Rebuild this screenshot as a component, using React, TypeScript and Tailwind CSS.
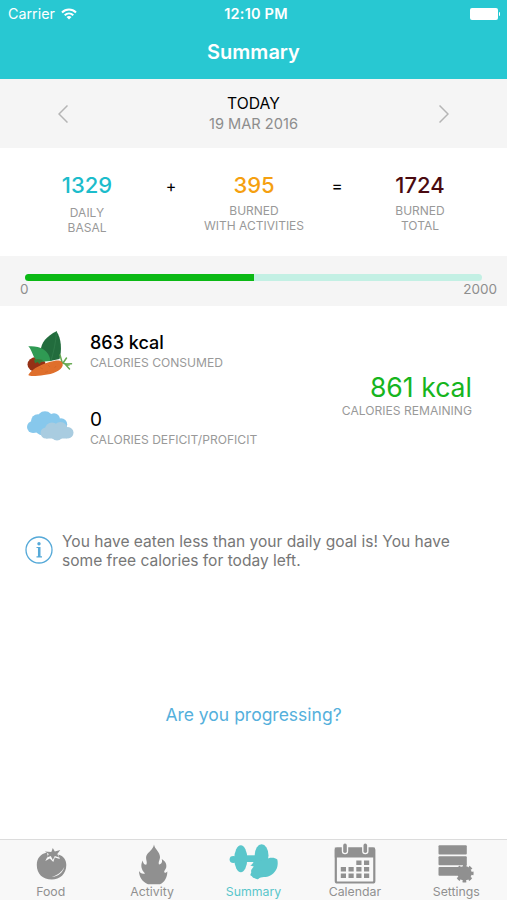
import React from 'react';

const FoodIcon = () => (
  <svg width="50" height="43" viewBox="-0.8 0 50 43" fill="currentColor">
    <path d="M10 22C10 15 14 11 20 9.500L21 13L18.500 18L23 15.500L26.500 19L28 14.500L33 16L31.500 11.500C37 13 39.500 17 39.500 22C39.500 31 33 36.500 25 36.500C16 36.500 10 31 10 22Z" />
    <path d="M26 5L28 8.500L33.500 7L30.500 11L32.500 14.500L28 13L26 17L24 13L20 14.500L22 11L18 8.500L24.500 9Z" />
    <path d="M37.500 24C36 30 31 33.500 25 34C31 32 35 29 37.500 24Z" fill="#f8f8f8" />
  </svg>
);

const ActivityIcon = () => (
  <svg width="50" height="43" viewBox="-0.5 0 50 43" fill="currentColor">
    <path d="M26.500 1.500C27 6 32.500 9 32.500 14C32.500 17 30.500 19 31.500 21.500C34.500 21 35 18.500 34.200 16C37 17.500 39.500 20.500 38.800 24C38.300 26.500 36 28 37 29.500C38 30 39 29.500 39.800 28.200C40 34 37 39.500 32.500 41.300H20.500C15 39 11.500 34 11.500 28C12.500 30 15 31.500 17.500 30.500C14 27 12.500 22 15.300 17.500C15.500 20 16.500 21.700 18.700 21.700C20.500 19.500 17.500 16 19 12.500C20.500 9 25.500 7 26.500 1.500Z" />
  </svg>
);

const SummaryIcon = () => (
  <svg width="50" height="43" viewBox="-1.300 0 50 43" fill="currentColor">
    <ellipse cx="4" cy="16.500" rx="3.700" ry="3.400" />
    <ellipse cx="11.500" cy="15.700" rx="6.500" ry="13.500" />
    <rect x="15" y="12.300" width="14" height="6.700" />
    <ellipse cx="32.300" cy="12.500" rx="6.900" ry="11.200" />
    <path d="M26 17C29 18 33 18 36 16.500C40 14.500 45 14 48 16.500C49.500 23 47 29 41 32.500C37 35 32 33 29 36C27.500 37 26 35 24.500 35C23 34.800 23 33 21.300 32.500C20.500 31 22.500 30 21.800 28.500C21.500 26.500 23.500 25 24.500 23.500L21 22.500C23.500 21.500 24 18.500 26 17Z" />
  </svg>
);

const CalendarIcon = () => (
  <svg width="50" height="43" viewBox="-0.3 0 50 43" fill="currentColor">
    <rect x="5.500" y="5.500" width="38.500" height="34" rx="1.500" fill="none" stroke="currentColor" strokeWidth="2.200" />
    <rect x="4.500" y="4.500" width="40" height="10" />
    <rect x="11.500" y="-0.500" width="6.400" height="11.800" rx="3.200" fill="#f8f8f8" />
    <rect x="31.800" y="-0.500" width="6.400" height="11.800" rx="3.200" fill="#f8f8f8" />
    <rect x="12.900" y="0.600" width="3.600" height="9.500" rx="1.800" />
    <rect x="33.200" y="0.600" width="3.600" height="9.500" rx="1.800" />
    <path d="M26 17.500h5.200v4.600H26zM33.700 17.500h5.200v4.600h-5.200zM10.500 24h5.200v4.600h-5.200zM18.200 24h5.200v4.600h-5.200zM26 24h5.200v4.600H26zM33.700 24h5.200v4.600h-5.200zM10.500 30.500h5.200v4.600h-5.200zM18.200 30.500h5.200v4.600h-5.200zM26 30.500h5.200v4.600H26zM33.700 30.500h5.200v4.600h-5.200z" />
  </svg>
);

const SettingsIcon = () => (
  <svg width="50" height="43" viewBox="0 0 50 43" fill="currentColor">
    <rect x="7.500" y="2.300" width="28.300" height="9.300" rx="1" />
    <rect x="7.500" y="13.200" width="28.300" height="9" rx="1" />
    <path d="M8.500 24H33V32.800H8.500Q7.500 32.800 7.500 31.800V25Q7.500 24 8.500 24Z" />
    <circle cx="33.500" cy="30.300" r="7.200" />
    <circle cx="33.500" cy="30.300" r="7.800" fill="none" stroke="currentColor" strokeWidth="2.600" strokeDasharray="3.600 2.526" strokeDashoffset="1.800" />
  </svg>
);

const VegetablesIcon = () => (
  <svg width="50" height="50" viewBox="0 0 50 50">
    <path d="M31.500 1.300C22 6 15.500 13 15.800 21C17 26 21 30 25 31L34.500 29C37 20 36.500 9 31.500 1.300Z" fill="#226c3d" />
    <path d="M31.500 1.300C31 12 28.500 22 26 31" fill="none" stroke="#33804d" strokeWidth="0.700" />
    <ellipse cx="11.500" cy="34.500" rx="9" ry="7.500" fill="#953116" />
    <path d="M3.300 16.300C13 15.500 24 18.500 25.500 31L14 32C7 28 8 21 3.300 16.300Z" fill="#2f9a53" />
    <path d="M9 29.500L13 29L18 30L14.500 34L12.500 32L10 33.500Z" fill="#3a7b37" />
    <path d="M34 32L44 35M37 32L35 25M38 33L41.500 28M41 34L46.500 33.800M40 34L44.500 39" fill="none" stroke="#65a951" strokeWidth="1.500" strokeLinecap="round" />
    <path d="M3.300 45C7 38.500 19 32.500 29 31C35 29.800 38.300 31.500 37.700 35.500C36.500 40.500 28 44.200 19 45C12 46 5 46.800 3.300 45Z" fill="#df6f2c" />
    <path d="M15 37.500L18 39M23 35L25 37M29.500 38L31 36M20 42.500L23 41.500" stroke="#cf6325" strokeWidth="0.700" />
  </svg>
);

const CloudsIcon = () => (
  <svg width="50" height="36" viewBox="0 -0.5 50 36">
    <g fill="#87c8ec">
      <circle cx="8" cy="19.500" r="6" />
      <circle cx="12.800" cy="13.500" r="6.800" />
      <circle cx="20" cy="12" r="8.200" />
      <circle cx="29" cy="11.800" r="6" />
      <circle cx="36" cy="17" r="6.200" />
      <circle cx="18" cy="19.500" r="8.500" />
      <rect x="8" y="12" width="28" height="13" />
    </g>
    <g fill="#a9cce0">
      <circle cx="21" cy="25.500" r="5.500" />
      <circle cx="27" cy="22" r="7" />
      <circle cx="35.500" cy="21.500" r="7" />
      <circle cx="42.800" cy="25.300" r="5.700" />
      <circle cx="32" cy="26.500" r="6.500" />
      <rect x="21" y="23" width="21" height="8" />
    </g>
  </svg>
);

const StatusBar = () => (
  <div className="grid h-[28px] grid-cols-3 items-center pr-[7px] pl-2 text-[14.500px] leading-none">
    <div className="flex items-center gap-[6px]">
      <span className="text-[14.3px]">Carrier</span>
      <svg width="16" height="12" viewBox="0 0 16 12" fill="none" stroke="currentColor" strokeWidth="2">
        <path d="M1 4.500C5 0.500 11 0.500 15 4.500M3.700 7.200C6.200 4.800 9.800 4.800 12.300 7.200" />
        <path d="M8 11.500L5.500 9Q8 7 10.500 9Z" fill="currentColor" stroke="none" />
      </svg>
    </div>
    <div className="pl-[4px] text-center font-semibold tracking-[0.2px] whitespace-nowrap">12:10 PM</div>
    <div className="flex items-center justify-end gap-px">
      <div className="h-[12px] w-[28px] rounded-[2px] bg-white" />
      <div className="h-[4px] w-[1.5px] rounded-r bg-white" />
    </div>
  </div>
);

interface TotalProps {
  value: string;
  lines: [string, string];
  color: string;
  className?: string;
}

const Total: React.FC<TotalProps> = ({ value, lines, color, className = '' }) => (
  <div className="flex flex-col items-center whitespace-nowrap">
    <div className={`text-[22px] leading-[26px] font-medium ${color}`}>{value}</div>
    <div className={`text-center text-[12px] leading-[14.5px] text-[#999] ${className}`}>
      {lines[0]}
      <br />
      {lines[1]}
    </div>
  </div>
);

const tabs = [
  { name: 'Food', icon: <FoodIcon /> },
  { name: 'Activity', icon: <ActivityIcon /> },
  { name: 'Summary', icon: <SummaryIcon />, active: true },
  { name: 'Calendar', icon: <CalendarIcon /> },
  { name: 'Settings', icon: <SettingsIcon /> },
];

const App: React.FC = () => {
  const burned = 395 + 1329;
  const consumed = 863;
  const goal = 2000;

  return (
    <div className="flex h-[900px] w-[507px] flex-col overflow-hidden bg-white font-['Inter',sans-serif] text-black">
      {/* Header */}
      <header className="h-[79px] shrink-0 bg-[#28c8d2] text-white">
        <StatusBar />
        <h1 className="pt-[10px] text-center text-[20px] leading-[28px] font-semibold">Summary</h1>
      </header>

      {/* Date picker */}
      <div className="flex h-[69px] shrink-0 items-center justify-between bg-[#f5f5f5] px-[58px] text-[#b5b5b5]">
        <svg width="10" height="18" viewBox="0 0 10 18" fill="none" stroke="currentColor" strokeWidth="1.500">
          <path d="M9.500 0.500L1 9L9.500 17.500" />
        </svg>
        <div className="text-center">
          <div className="text-[15.7px] leading-[21px] text-black">TODAY</div>
          <div className="text-[14.6px] leading-[20px] text-[#8d8d8d]">19 MAR 2016</div>
        </div>
        <svg width="10" height="18" viewBox="0 0 10 18" fill="none" stroke="currentColor" strokeWidth="1.500">
          <path d="M0.500 0.500L9 9L0.500 17.500" />
        </svg>
      </div>

      {/* Burned totals */}
      <div className="grid h-[108px] shrink-0 grid-cols-[140px_45px_104px_62px_104px] items-start pt-[24px] pl-[17px]">
        <Total value="1329" lines={['DAILY', 'BASAL']} color="text-[#1cbccb]" className="pt-[8px]" />
        <div className="pt-[2px] pr-[17px] text-center text-[16px]">+</div>
        <Total value="395" lines={['BURNED', 'WITH ACTIVITIES']} color="text-[#f5a010]" className="pt-[6px]" />
        <div className="pt-[2px] text-center text-[17px]">=</div>
        <Total value={`${burned}`} lines={['BURNED', 'TOTAL']} color="text-[#4a0a10]" className="pt-[6px]" />
      </div>

      {/* Progress */}
      <div className="h-[50px] shrink-0 bg-[#f5f5f5] pt-[18px]">
        <div className="mx-[25px] h-[7px] overflow-hidden rounded-full bg-[#c3f0e4]">
          <div className="h-full bg-[#0bb915]" style={{ width: `${(consumed / burned) * 100}%` }} />
        </div>
        <div className="flex justify-between pr-[10px] pl-[20px] text-[13.5px] leading-[17px] text-[#8e8e8e]">
          <span>0</span>
          <span>{goal}</span>
        </div>
      </div>

      {/* Calories */}
      <section className="flex h-[214px] shrink-0 justify-between pr-[35px] pl-[25px]">
        <div className="flex flex-col pt-[24px]">
          <div className="flex h-[77px] gap-[15px]">
            <VegetablesIcon />
            <div>
              <div className="text-[18px] leading-[26px] font-medium">{consumed} kcal</div>
              <div className="text-[12.1px] leading-[14px] text-[#999]">CALORIES CONSUMED</div>
            </div>
          </div>
          <div className="flex gap-[15px]">
            <CloudsIcon />
            <div>
              <div className="text-[19px] leading-[26px]">0</div>
              <div className="text-[12.1px] leading-[14px] text-[#999]">CALORIES DEFICIT/PROFICIT</div>
            </div>
          </div>
        </div>
        <div className="pt-[64px] text-right">
          <div className="text-[26.6px] leading-[34px] text-[#16b51d]">{burned - consumed} kcal</div>
          <div className="text-[12.1px] leading-[14px] text-[#999]">CALORIES REMAINING</div>
        </div>
      </section>

      {/* Tip */}
      <div className="flex h-[60px] shrink-0 gap-[9px] pt-[12px] pl-[25px]">
        <svg className="mt-[4px]" width="28" height="28" viewBox="0 0 28 28" fill="none" stroke="#55a9d8">
          <circle cx="14" cy="14" r="13" strokeWidth="1.300" />
          <circle cx="14" cy="7.700" r="1.700" fill="#55a9d8" stroke="none" />
          <path d="M11.500 11.500H14.500V20.500M11.500 20.800H17" strokeWidth="1.200" />
          <path d="M14.200 11V21" strokeWidth="2.500" />
        </svg>
        <p className="w-[420px] text-[15.55px] leading-[19px] text-[#777]">
          You have eaten less than your daily goal is! You have
          <br />
          some free calories for today left.
        </p>
      </div>

      <a href="#progress" className="mt-[123px] text-center text-[17.5px] leading-[24px] text-[#55b0dc]">
        Are you progressing?
      </a>

      {/* Tab bar */}
      <nav className="mt-auto grid h-[61px] shrink-0 grid-cols-5 border-t border-[#dcdcdc] bg-[#f8f8f8]">
        {tabs.map((tab) => (
          <a
            key={tab.name}
            href={`#${tab.name.toLowerCase()}`}
            className={`flex flex-col items-center pt-[3px] ${tab.active ? 'text-[#5ac6cb]' : 'text-[#909090]'}`}
          >
            {tab.icon}
            <span className="text-[12.3px] leading-[12px]">{tab.name}</span>
          </a>
        ))}
      </nav>
    </div>
  );
};

export default App;
